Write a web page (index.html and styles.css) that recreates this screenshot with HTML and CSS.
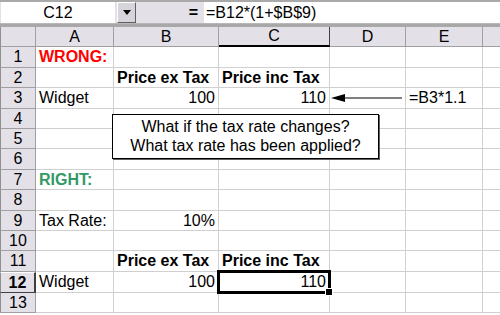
FILE: index.html
```html
<!DOCTYPE html>
<html>
<head>
<meta charset="utf-8">
<link rel="stylesheet" href="styles.css">
</head>
<body>
<div class="app">
  <div class="fbar">
    <div class="namebox">C12</div>
    <div class="ddbtn"><span class="tri"></span></div>
    <div class="eq">=</div>
    <div class="formula">=B12*(1+$B$9)</div>
  </div>
  <div class="sheet">
    <div class="grid">
      <div class="ch corner"></div>
      <div class="ch">A</div>
      <div class="ch">B</div>
      <div class="ch sel">C</div>
      <div class="ch">D</div>
      <div class="ch">E</div>
      <div class="ch last"></div>

      <div class="rh">1</div><div class="c wrong">WRONG:</div><div class="c"></div><div class="c"></div><div class="c"></div><div class="c"></div><div class="c last"></div>
      <div class="rh">2</div><div class="c"></div><div class="c b">Price ex Tax</div><div class="c b">Price inc Tax</div><div class="c"></div><div class="c"></div><div class="c last"></div>
      <div class="rh">3</div><div class="c">Widget</div><div class="c r">100</div><div class="c r">110</div><div class="c"></div><div class="c">=B3*1.1</div><div class="c last"></div>
      <div class="rh">4</div><div class="c"></div><div class="c"></div><div class="c"></div><div class="c"></div><div class="c"></div><div class="c last"></div>
      <div class="rh">5</div><div class="c"></div><div class="c"></div><div class="c"></div><div class="c"></div><div class="c"></div><div class="c last"></div>
      <div class="rh">6</div><div class="c"></div><div class="c"></div><div class="c"></div><div class="c"></div><div class="c"></div><div class="c last"></div>
      <div class="rh">7</div><div class="c right">RIGHT:</div><div class="c"></div><div class="c"></div><div class="c"></div><div class="c"></div><div class="c last"></div>
      <div class="rh">8</div><div class="c"></div><div class="c"></div><div class="c"></div><div class="c"></div><div class="c"></div><div class="c last"></div>
      <div class="rh">9</div><div class="c">Tax Rate:</div><div class="c r">10%</div><div class="c"></div><div class="c"></div><div class="c"></div><div class="c last"></div>
      <div class="rh">10</div><div class="c"></div><div class="c"></div><div class="c"></div><div class="c"></div><div class="c"></div><div class="c last"></div>
      <div class="rh">11</div><div class="c"></div><div class="c b">Price ex Tax</div><div class="c b">Price inc Tax</div><div class="c"></div><div class="c"></div><div class="c last"></div>
      <div class="rh sel">12</div><div class="c">Widget</div><div class="c r">100</div><div class="c r active">110<span class="handle"></span></div><div class="c"></div><div class="c"></div><div class="c last"></div>
      <div class="rh">13</div><div class="c"></div><div class="c"></div><div class="c"></div><div class="c"></div><div class="c"></div><div class="c last"></div>
    </div>
    <div class="textbox">What if the tax rate changes?<br>What tax rate has been applied?</div>
    <svg class="arrow" width="76" height="14" viewBox="0 0 76 14">
      <polygon points="1,7 15,3 15,11" fill="#000"/>
      <line x1="12" y1="7" x2="72" y2="7" stroke="#000" stroke-width="1.2"/>
    </svg>
  </div>
</div>
</body>
</html>
```

FILE: styles.css
```css
html, body {
  margin: 0;
  padding: 0;
  background: #ffffff;
}
body {
  font-family: "Liberation Sans", Arial, sans-serif;
  font-size: 16px;
  color: #000;
  width: 500px;
  height: 315px;
  overflow: hidden;
}
.app {
  width: 500px;
  height: 315px;
  overflow: hidden;
}
.fbar {
  display: flex;
  height: 24px;
  background: #e4e0e8;
  border-top: 2px solid #a9a9a9;
  box-sizing: border-box;
  border-bottom: 1px solid #b8b8b8;
}
.namebox {
  width: 114px;
  margin-left: 1px;
  background: #fff;
  text-align: center;
  line-height: 21px;
  box-sizing: border-box;
}
.ddbtn {
  width: 19px;
  margin-left: 2px;
  background: #d8d4dc;
  border: 1px solid;
  border-color: #fff #606060 #606060 #fff;
  box-sizing: border-box;
  display: flex;
  align-items: center;
  justify-content: center;
}
.tri {
  width: 0;
  height: 0;
  border-left: 4px solid transparent;
  border-right: 4px solid transparent;
  border-top: 5px solid #000;
}
.eq {
  width: 68px;
  text-align: right;
  padding-right: 6px;
  box-sizing: border-box;
  font-weight: bold;
  line-height: 21px;
}
.formula {
  flex: 1;
  background: #fff;
  padding-left: 2px;
  line-height: 21px;
}
.sheet {
  position: relative;
  border-top: 3px solid #a8a8a8;
}
.grid {
  display: grid;
  grid-template-columns: 36px 78px 105px 111px 76px 77px 1fr;
  grid-template-rows: 20px 21px 20px 21px 20px 20px 21px 20px 21px 20px 20px 21px 21px 20px;
}
.ch, .rh {
  background: #e4e0e8;
  box-sizing: border-box;
  border-right: 1px solid #a0a0a0;
  border-bottom: 1px solid #a0a0a0;
  text-align: center;
  line-height: 19px;
}
.rh {
  border-left: 1px solid #909090;
  line-height: 20px;
}
.ch.corner {
  border-left: 1px solid #909090;
}
.ch.sel {
  border-bottom: 2px solid #000;
  border-right: 1px solid #404040;
  line-height: 18px;
}
.rh.sel {
  font-weight: bold;
  border-top: 1px solid #fff;
  border-right: 2px solid #404040;
  border-bottom: 1px solid #404040;
  line-height: 19px;
}
.ch.last {
  border-right: none;
}
.c {
  box-sizing: border-box;
  border-right: 1px solid #d0d0d0;
  border-bottom: 1px solid #d0d0d0;
  padding: 0 3px;
  line-height: 20px;
  white-space: nowrap;
}
.c.last {
  border-right: none;
}
.c.r {
  text-align: right;
}
.c.b {
  font-weight: bold;
  overflow: visible;
}
.wrong {
  color: #ff0000;
  font-weight: bold;
}
.right {
  color: #339966;
  font-weight: bold;
}
.active {
  position: relative;
}
.active::after {
  content: "";
  position: absolute;
  left: -2px;
  top: -2px;
  right: -2px;
  bottom: -2px;
  border: 3px solid #000;
  pointer-events: none;
}
.handle {
  position: absolute;
  right: -4px;
  bottom: -4px;
  width: 6px;
  height: 6px;
  background: #000;
  border: 1px solid #fff;
  z-index: 2;
}
.textbox {
  position: absolute;
  left: 112px;
  top: 87px;
  width: 267px;
  height: 45px;
  box-sizing: border-box;
  background: #fff;
  border: 1px solid #000;
  box-shadow: 1px 1px 0 #606060;
  text-align: center;
  line-height: 19px;
  padding-top: 2px;
}
.arrow {
  position: absolute;
  left: 330px;
  top: 64px;
}
```
